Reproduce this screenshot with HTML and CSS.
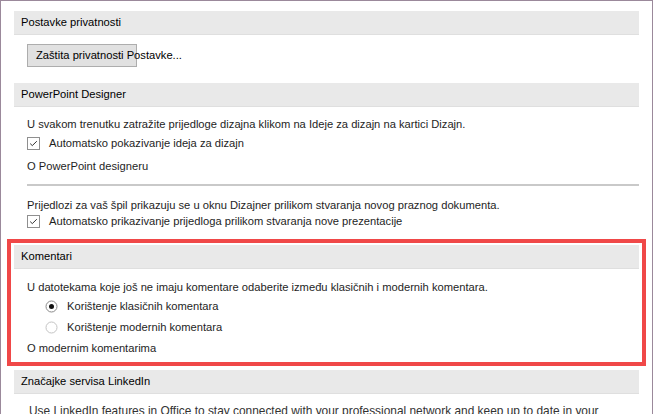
FILE: index.html
```html
<!DOCTYPE html>
<html>
<head>
<meta charset="utf-8">
<link rel="stylesheet" href="styles.css">
</head>
<body>
<div class="frame">
  <section class="sec sec-privacy">
    <div class="band">Postavke privatnosti</div>
    <div class="btn-row"><span class="btn">Zaštita privatnosti Postavke...</span></div>
  </section>

  <section class="sec sec-designer">
    <div class="band">PowerPoint Designer</div>
    <div class="body">
      <div class="line l1">U svakom trenutku zatražite prijedloge dizajna klikom na Ideje za dizajn na kartici Dizajn.</div>
      <div class="line check cb1">
        <svg class="cbox" width="13" height="13" viewBox="0 0 13 13"><rect x="0.5" y="0.5" width="12" height="12" fill="#fff" stroke="#8f8f8f"/><path d="M3.2 6.6 L5.3 8.6 L9.8 4.2" fill="none" stroke="#333" stroke-width="1"/></svg>
        <span>Automatsko pokazivanje ideja za dizajn</span>
      </div>
      <div class="line l-about">O PowerPoint designeru</div>
      <div class="sep"></div>
      <div class="line l-sugg">Prijedlozi za vaš špil prikazuju se u oknu Dizajner prilikom stvaranja novog praznog dokumenta.</div>
      <div class="line check cb2">
        <svg class="cbox" width="13" height="13" viewBox="0 0 13 13"><rect x="0.5" y="0.5" width="12" height="12" fill="#fff" stroke="#8f8f8f"/><path d="M3.2 6.6 L5.3 8.6 L9.8 4.2" fill="none" stroke="#333" stroke-width="1"/></svg>
        <span>Automatsko prikazivanje prijedloga prilikom stvaranja nove prezentacije</span>
      </div>
    </div>
  </section>

  <section class="sec sec-comments">
    <div class="band">Komentari</div>
    <div class="body">
      <div class="line c-intro">U datotekama koje još ne imaju komentare odaberite između klasičnih i modernih komentara.</div>
      <div class="line radio r1">
        <svg class="rbtn" width="13" height="13" viewBox="0 0 13 13"><circle cx="6.5" cy="6.5" r="5.5" fill="#fff" stroke="#8a8a8a"/><circle cx="6.5" cy="6.5" r="2.5" fill="#111"/></svg>
        <span>Korištenje klasičnih komentara</span>
      </div>
      <div class="line radio r2">
        <svg class="rbtn" width="13" height="13" viewBox="0 0 13 13"><circle cx="6.5" cy="6.5" r="5.5" fill="#fff" stroke="#c4c4c4"/></svg>
        <span>Korištenje modernih komentara</span>
      </div>
      <div class="line c-about">O modernim komentarima</div>
    </div>
  </section>

  <section class="sec sec-linkedin">
    <div class="band">Značajke servisa LinkedIn</div>
    <div class="li-text">Use LinkedIn features in Office to stay connected with your professional network and keep up to date in your</div>
  </section>
</div>
</body>
</html>
```
FILE: styles.css
```css
html, body {
  margin: 0;
  padding: 0;
  background: #fff;
}
body {
  width: 653px;
  height: 414px;
  overflow: hidden;
  font-family: "Liberation Sans", Arial, sans-serif;
  font-size: 11.18px;
  color: #1e1e1e;
}
.frame {
  box-sizing: border-box;
  width: 653px;
  min-height: 414px;
  border: 1px solid #9b899b;
  border-bottom: none;
  padding: 10px 13px 0 13px;
}
.band {
  height: 23px;
  line-height: 23px;
  background: #e9e9e9;
  border-bottom: 1px solid #dfdfdf;
  padding-left: 7px;
  color: #000;
  white-space: nowrap;
}
.btn-row {
  padding: 9px 0 0 13px;
  height: 23px;
}
.btn {
  display: inline-block;
  box-sizing: border-box;
  width: 110px;
  height: 23px;
  line-height: 21px;
  background: #e1e1e1;
  border: 1px solid #adadad;
  padding-left: 8px;
  white-space: nowrap;
  overflow: visible;
  color: #000;
}
.sec-designer {
  margin-top: 16px;
}
.body {
  padding-left: 13px;
}
.line {
  height: 16px;
  line-height: 16px;
  white-space: nowrap;
}
.check, .radio {
  display: flex;
  align-items: center;
}
.cbox {
  flex: none;
  margin-right: 9px;
}
.radio {
  padding-left: 18px;
}
.rbtn {
  flex: none;
  margin-right: 9px;
}
.l1 { margin-top: 9px; }
.cb1 { margin-top: 3px; }
.l-about { margin-top: 7px; }
.sep {
  height: 2px;
  background: #c9c9c9;
  margin-top: 10px;
}
.l-sugg { margin-top: 11px; }
.cb2 { margin-top: 0; }

.sec-comments {
  margin: 10px -7px 0 -7px;
  border: 4px solid #f04848;
  padding: 2px 3px 6px 3px;
}
.c-intro { margin-top: 10px; }
.r1 { margin-top: 3px; }
.r2 { margin-top: 5px; }
.c-about { margin-top: 5px; }

.sec-linkedin {
  margin-top: 4px;
}
.li-text {
  margin-top: 9px;
  padding-left: 15px;
  font-size: 11.9px;
  line-height: 16px;
  white-space: nowrap;
  color: #333;
}
```
